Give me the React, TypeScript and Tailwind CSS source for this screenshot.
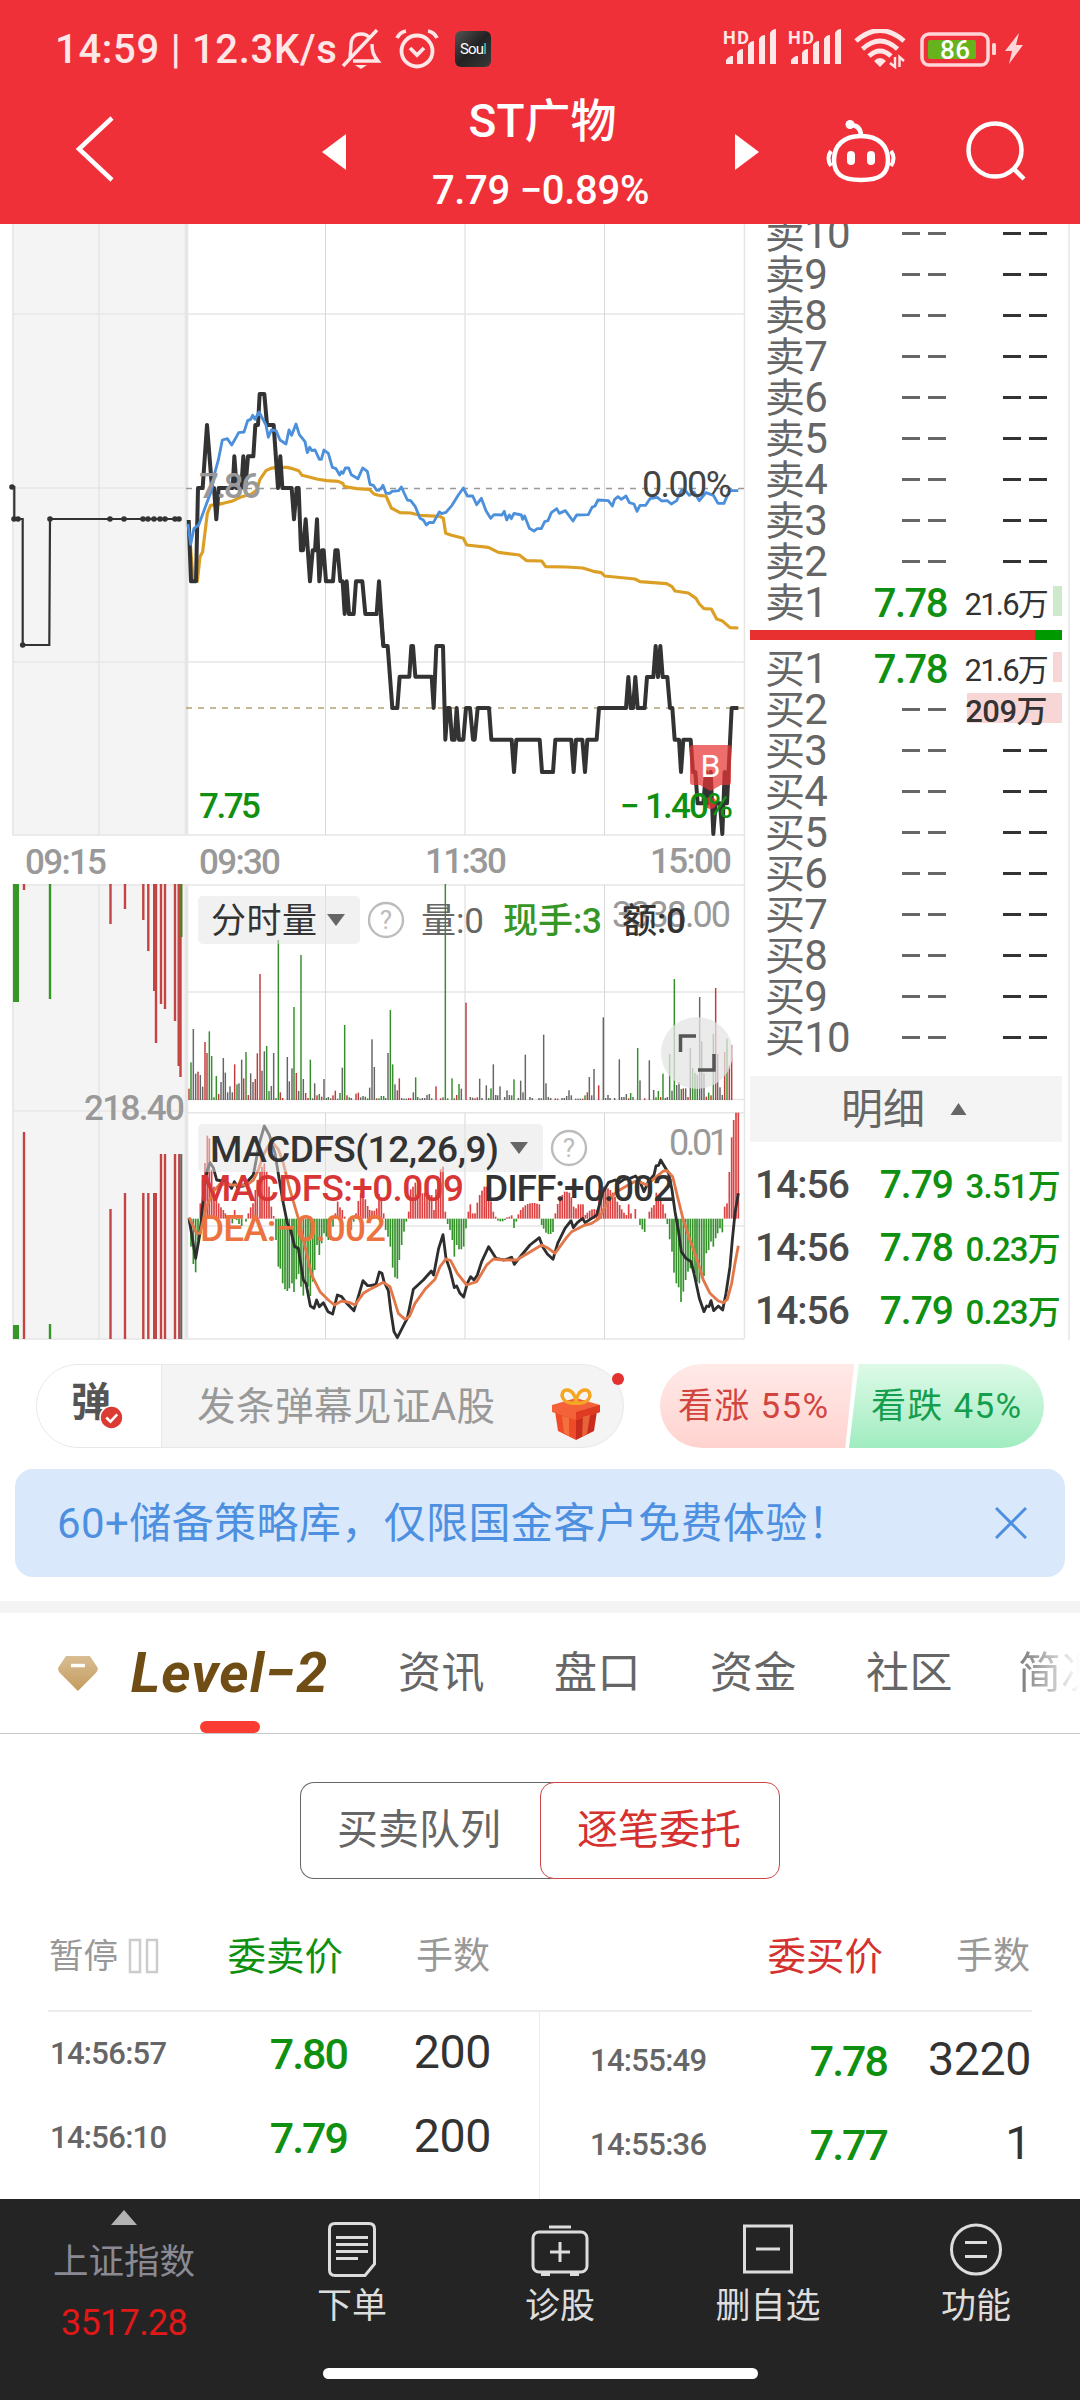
import type { ReactNode } from 'react';

// bar = x, tip y, colour key
const VOLUME_AM = `567,656,r 573,577,g 580,477,k 587,611,k 594,605,r 601,615,k 608,650,k 615,516,r 621,549,r 628,484,g 635,558,g 642,682,g 649,618,g 656,672,r 663,636,k 670,564,k 676,608,k 683,667,k 690,649,k 697,667,k 704,583,r 711,643,g 717,640,k 725,569,k 731,625,r 738,546,g 745,675,r 752,610,k 759,636,k 766,627,r 772,550,r 780,312,r 786,602,k 793,544,k 800,528,g 807,663,g 814,648,k 821,549,k 828,684,g 835,210,g 841,667,r 848,684,r 862,561,k 868,634,k 876,595,k 882,411,g 889,609,r 896,663,k 903,255,g 910,627,k 917,669,r 924,684,r 931,569,g 938,685,k 944,640,k 951,676,r 958,672,g 965,680,r 972,627,k 979,684,g 985,681,k 992,685,k 999,676,r 1006,662,r 1013,686,k 1020,669,g 1027,593,k 1034,465,g 1041,676,r 1048,682,g 1054,684,k 1068,671,r 1075,668,r 1082,682,k 1089,678,k 1096,680,g 1103,685,g 1109,653,k`;
const VOLUME_PM = `6,508,k 13,591,k 20,685,r 27,685,g 34,678,g 41,678,g 47,684,k 54,549,k 61,420,g 68,583,g 75,643,k 82,661,k 88,625,r 95,684,k 102,686,k 109,686,k 116,684,r 122,685,r 130,667,k 137,622,g 143,681,k 150,686,k 157,684,k 164,684,k 171,675,k 178,672,k 185,685,k 198,649,r 212,685,r 219,682,k 226,42,g 233,685,g 246,625,g 253,685,k 260,675,r 267,642,g 274,656,k 288,398,r 301,681,k 308,683,k 315,685,r 322,682,r 329,626,k 336,684,k 349,646,k 356,684,k 363,655,g 370,583,k 377,675,k 383,676,k 390,649,k 404,681,k 411,661,k 418,675,k 425,676,k 432,628,g 445,684,k 452,632,k 459,667,k 466,554,k 480,681,k 487,684,k 507,684,k 514,685,k 521,494,k 528,640,k 535,681,k 542,684,k 556,685,r 563,686,r 576,684,k 583,684,k 590,678,k 597,661,k 604,676,k 617,686,k 624,686,k 631,686,k 638,686,r 645,676,g 652,667,r 658,621,k 665,676,k 672,597,k 686,646,r 700,442,k 707,684,k 714,675,k 720,684,k 734,684,k 748,568,k 755,681,k 762,681,k 769,672,k 776,685,r 782,669,g 789,681,k 803,534,g 810,631,k 824,685,r 838,571,k 851,660,k 858,682,g 865,663,g 872,681,r 879,611,g 886,684,k 892,681,k 899,552,g 906,662,k 913,327,g 920,645,k 927,636,k 934,657,g 940,655,r 947,655,k 954,681,r 961,534,k 968,594,g 975,609,g 982,614,g 989,381,k 995,514,k 1002,610,k 1009,680,r 1016,668,g 1023,676,r 1030,491,g 1037,354,r 1043,552,k 1050,652,k 1057,675,k 1064,546,r 1071,506,g 1078,586,r 1085,525,r`;

const MACD_AM = `567,1060 573,1130 580,1182 587,1207 594,1110 601,1000 608,930 615,879 622,797 628,805 635,900 642,950 649,985 656,1000 663,1012 670,1020 676,1030 683,1040 697,1060 704,1020 710,1050 717,1062 725,1068 738,1055 745,1030 752,1012 759,1000 766,960 772,930 780,905 786,890 793,880 800,905 807,950 814,1010 821,1038 828,1110 835,1190 841,1196 848,1240 855,1258 862,1263 868,1255 876,1240 882,1266 889,1228 896,1212 903,1250 910,1277 917,1240 924,1250 931,1278 938,1235 944,1200 951,1125 958,1155 965,1120 972,1090 979,1100 985,1110 992,1110 999,1070 1006,1030 1013,995 1020,1012 1027,1020 1034,1040 1048,1068 1054,1080 1061,1055 1068,1030 1075,993 1082,970 1089,960 1096,988 1103,1008 1109,1020`;
const MACD_PM = `6,1022 13,1022 20,1015 27,972 34,988 41,1030 47,1080 54,1100 61,1130 68,1193 75,1222 82,1226 88,1170 95,1125 102,1085 109,1055 116,1025 122,958 129,950 136,938 143,948 150,960 157,970 164,968 171,972 178,975 185,975 192,1020 198,958 205,940 212,898 219,890 226,1025 233,1062 240,1080 247,1110 253,1160 260,1125 267,1138 274,1138 281,1130 288,1075 295,1025 301,1003 308,1030 315,1030 322,998 329,975 336,962 343,950 349,950 356,962 363,994 370,1025 377,1040 384,1052 391,1054 398,1054 405,1050 411,1042 418,1040 425,1036 432,1074 439,1055 445,1033 452,1020 459,1012 466,1006 473,1002 480,1000 487,999 494,999 501,1001 508,1003 515,1065 521,1076 528,1088 535,1092 542,1092 549,1086 556,1030 563,1002 570,985 577,975 584,965 591,965 598,968 604,982 611,1010 618,1015 625,1003 632,1003 639,1003 646,1035 652,1028 659,1022 666,1018 673,1017 680,1020 687,960 694,968 701,950 707,950 714,955 721,960 728,968 735,980 742,995 749,1005 755,1018 762,1028 769,1035 776,1003 783,1030 796,1017 810,1065 817,1078 824,1086 838,1025 845,1013 852,1005 859,968 865,985 872,990 879,1003 886,1030 892,1062 899,1108 906,1145 912,1208 919,1240 926,1252 933,1296 940,1265 947,1230 954,1205 961,1195 968,1190 975,1210 981,1235 988,1240 995,1225 1002,1218 1009,1150 1016,1140 1023,1115 1030,1130 1037,1105 1043,1090 1050,1075 1057,1087 1064,1010 1071,1000 1078,906 1085,802 1091,750 1098,728 1105,728`;

const PRICE_AM = '26,480 33,664 48,664 54,384 68,384 81,195 96,384 102,384 109,478 116,384 158,384 163,289 170,384 184,384 190,289 196,384 204,289 220,289 226,195 234,195 239,102 253,102 261,195 281,195 294,384 301,289 307,384 335,384 342,478 350,384 356,384 363,571 369,571 377,478 390,664 398,571 405,571 411,478 418,664 426,571 431,571 438,664 459,664 466,571 473,571 481,664 488,664 494,762 500,664 507,762 521,762 528,664 547,664 556,762 590,762 597,664 610,857';
const PRICE_PM = '2,700 10,798 23,798 37,984 52,984 59,890 88,890 94,798 99,798 106,890 155,890 161,984 169,798 189,798 196,1079 203,984 209,984 216,1079 224,1079 230,984 237,1079 250,1079 258,984 270,984 279,1079 284,1079 293,984 327,984 334,1079 395,1079 402,1176 409,1079 479,1079 486,1176 519,1176 526,1079 574,1079 581,1176 588,1079 607,1079 615,1176 622,1079 650,1079 657,984 738,984 745,891 752,984 759,984 766,891 773,984 794,984 801,891 820,891 827,798 834,891 841,798 848,891 862,891 870,984 877,984 884,1079 897,1079 903,1176 910,1079 932,1079 939,1176 946,1176 953,1270 970,1270 978,1176 985,1270 992,1176 1000,1362 1007,1270 1020,1270 1027,1362 1034,1176 1041,1270 1055,984 1075,984';
const AVG_AM = '26,490 40,664 52,664 60,590 68,575 82,460 92,436 110,434 130,430 155,424 185,410 215,402 230,390 240,358 258,332 272,325 290,322 320,322 338,326 356,332 366,346 390,352 410,357 440,362 475,364 488,370 494,380 530,386 568,388 582,402 600,407';
const AVG_PM = '0,347 18,348 34,384 60,398 92,399 120,406 180,409 190,415 197,460 215,466 250,475 260,495 325,502 355,517 418,525 440,542 485,543 497,560 560,561 608,564 640,574 664,578 674,588 765,597 780,605 860,611 876,620 885,633 925,639 948,655 958,672 972,686 994,687 1010,717 1026,722 1050,743 1075,744';
const INDEX_AM = '24,492 32,553 42,505 56,495 80,430 95,390 104,340 115,300 127,240 142,236 155,255 165,238 176,218 192,216 203,182 212,178 218,166 225,178 237,156 250,180 258,195 265,232 274,210 288,212 300,240 318,252 327,210 335,226 348,192 358,224 375,245 382,278 389,262 396,272 405,270 418,298 424,298 432,270 445,280 457,322 468,326 479,345 484,335 489,340 496,324 506,324 514,344 534,356 548,324 562,334 570,373 580,376 590,391 600,390';
const INDEX_PM = '0,330 9,316 18,340 30,340 36,334 56,332 64,321 82,360 92,362 106,380 120,415 130,420 139,435 148,427 160,428 178,396 185,401 198,397 216,376 235,345 250,324 262,348 278,348 290,374 304,355 318,392 332,415 342,404 366,405 373,394 380,420 388,405 394,416 402,400 424,405 428,418 434,408 448,445 462,453 472,446 484,446 494,425 504,422 514,398 530,386 538,400 556,392 579,423 590,405 625,404 636,382 645,378 654,360 685,362 697,378 704,358 714,350 724,358 738,348 748,368 762,372 771,394 780,376 797,376 810,356 832,352 845,363 862,362 874,372 890,362 905,330 918,334 928,346 942,336 958,362 978,338 1000,346 1014,370 1032,370 1048,332 1075,332';
const DIFF_AM = '567,1045 587,1165 600,1090 612,960 622,900 630,878 640,893 650,930 680,935 695,955 703,935 712,950 730,948 760,915 778,820 793,768 808,795 825,850 838,930 850,1000 862,1060 872,1080 884,1130 895,1135 910,1230 918,1240 931,1308 942,1315 950,1290 958,1310 970,1298 984,1325 998,1332 1012,1275 1025,1280 1040,1300 1062,1322 1075,1280 1089,1232 1103,1247 1110,1247';
const DIFF_PM = '0,1247 18,1243 28,1206 36,1210 42,1235 55,1262 62,1320 72,1385 82,1403 105,1358 112,1345 130,1258 160,1230 184,1203 191,1215 206,1135 219,1094 228,1165 240,1200 253,1253 260,1248 270,1270 281,1281 292,1240 302,1220 312,1230 322,1215 335,1175 356,1130 378,1165 402,1170 425,1162 433,1183 455,1155 480,1125 508,1103 518,1130 532,1152 549,1168 563,1120 585,1075 603,1052 610,1073 622,1058 638,1045 645,1058 670,1042 680,1035 698,968 716,937 735,930 748,938 762,928 780,925 797,918 810,935 822,965 835,935 852,915 858,888 866,886 872,870 885,892 896,910 906,960 915,1025 925,1080 934,1145 948,1165 963,1175 972,1210 988,1285 1002,1325 1010,1308 1017,1310 1023,1292 1031,1322 1045,1308 1058,1320 1068,1270 1080,1190 1087,1110 1095,1030 1105,970';
const DEA_AM = '567,1042 590,1090 600,1090 620,1010 640,965 660,942 700,945 740,945 760,930 775,900 790,855 805,828 820,820 835,838 850,880 870,960 895,1045 915,1130 935,1215 960,1265 985,1290 1003,1305 1025,1293 1050,1298 1065,1305 1090,1270 1110,1258';
const DEA_PM = '0,1258 20,1248 40,1237 60,1250 85,1330 105,1348 118,1340 135,1300 165,1258 195,1228 210,1190 228,1167 242,1172 262,1210 290,1245 320,1235 350,1185 370,1167 402,1170 440,1170 470,1152 515,1125 535,1135 555,1150 590,1102 605,1085 640,1067 665,1060 688,1045 705,1010 722,982 745,962 780,942 800,932 830,945 860,920 880,903 892,902 908,920 925,990 940,1050 960,1110 985,1180 1000,1230 1020,1270 1045,1293 1060,1298 1072,1288 1085,1240 1095,1180 1105,1127';

// pre-open auction bars: x, y1, y2, width, colour
const AUCTION: [number, number, number, number, string][] = [
  [16, 884, 1002, 6, '#369626'], [24, 884, 890, 2.4, '#c44343'], [50, 884, 999, 2.4, '#369626'],
  [110.5, 884, 924, 2.4, '#c44343'], [125, 884, 909, 2.4, '#c44343'], [143.3, 884, 920, 2.4, '#c44343'],
  [148.3, 884, 951, 2.4, '#c44343'], [155, 884, 991, 4, '#c44343'], [156, 884, 1043, 2.4, '#c44343'],
  [161, 884, 1004, 2.4, '#c44343'], [165, 884, 1009, 2.4, '#c44343'], [175, 884, 1021, 2.4, '#c44343'],
  [178.7, 884, 1066, 2.4, '#c44343'], [180.5, 884, 1077, 2.4, '#c44343'], [181.3, 884, 937, 2.4, '#5f7a24'],
  [16, 1325, 1339, 6, '#369626'], [24, 1132, 1339, 2.4, '#c44343'], [50, 1324, 1339, 2.4, '#369626'],
  [110.5, 1209, 1339, 2.4, '#c44343'], [125, 1193, 1339, 2.4, '#c44343'], [143.3, 1193, 1339, 2.4, '#c44343'],
  [148.3, 1193, 1339, 2.4, '#c44343'], [155, 1193, 1339, 4, '#c44343'], [161, 1154, 1339, 2.4, '#c44343'],
  [165, 1154, 1339, 2.4, '#c44343'], [175, 1154, 1339, 2.4, '#c44343'], [179.3, 1154, 1339, 2.4, '#c44343'],
  [181.3, 1154, 1339, 2, '#666'],
];

const BAR_COLORS: Record<string, string> = { r: '#c03c3c', g: '#35902b', k: '#666' };

function VolumeBars({ data }: { data: string }) {
  return (
    <>
      {data.split(' ').map((item, i) => {
        const [x, y, c] = item.split(',');
        return <rect key={i} x={+x - 2.2} y={+y} width={4.4} height={690 - +y} fill={BAR_COLORS[c]} />;
      })}
    </>
  );
}

function MacdBars({ data }: { data: string }) {
  const zero = 1046;
  return (
    <>
      {data.split(' ').map((item, i) => {
        const [x, y] = item.split(',').map(Number);
        return <rect key={i} x={x - 2.5} y={Math.min(y, zero)} width={5} height={Math.abs(y - zero)} fill={y < zero ? '#dc4040' : '#35922a'} />;
      })}
    </>
  );
}

function Line({ d, color, w = 10 }: { d: string; color: string; w?: number }) {
  return <polyline points={d} fill="none" stroke={color} strokeWidth={w} strokeLinejoin="round" />;
}

function Label({ x, y, w, color, size = 35, weight = 500, children }: { x: number; y: number; w: number; color: string; size?: number; weight?: number; children: ReactNode }) {
  return <text x={x} y={y} textLength={w} fill={color} fontSize={size} fontWeight={weight}>{children}</text>;
}

function Help({ x, y }: { x: number; y: number }) {
  return (
    <g>
      <circle cx={x} cy={y} r="17" fill="none" stroke="#bcbcbc" strokeWidth="2.4" />
      <text x={x} y={y + 9} textAnchor="middle" fontSize="26" fill="#bcbcbc">?</text>
    </g>
  );
}

function Chart() {
  return (
    <svg viewBox="0 224 748 1116" className="w-[748px] h-[1116px] shrink-0">
      <rect x="12" y="224" width="174" height="611" fill="#f4f4f4" />
      <rect x="12" y="884" width="174" height="455" fill="#f4f4f4" />
      <g stroke="#e6e6e6" strokeWidth="1.6">
        <path d="M13 224V835M99 224V835M13 884V1339M99 884V1339M465 224V835M465 885V1100M465 1113V1339M744.5 224V1339" />
        <path d="M12 314H744M12 488H186M12 662H744M12 835H744M12 885H744M186 992H744M186 1099.5H744M12 1111H186M186 1112.7H744M186 1226H744M12 1339H744" />
        <path d="M186.5 224V835M186.5 884V1339" strokeWidth="3.6" />
      </g>
      <path d="M325.5 224V835M604.5 224V835M325.5 885V1099M604.5 885V1099M325.5 1113V1339M604.5 1113V1339" stroke="#d8d8d8" strokeWidth="1" />
      <path d="M186 488.5H744" stroke="#999" strokeWidth="1.6" strokeDasharray="6 6" />
      <path d="M186 708H744" stroke="#b3a376" strokeWidth="1.6" strokeDasharray="6 6" />

      <path d="M12.5 487H14.3V519H22.7V645H49.3L50 519H181" fill="none" stroke="#333" strokeWidth="2.2" />
      {[[12, 487], [14, 519], [18, 519], [22.7, 645], [50, 519], [110, 519], [124, 519], [143, 519], [148, 519], [154, 519], [160, 519], [165, 519], [175, 519], [179, 519]].map(([x, y]) => (
        <circle key={`${x}-${y}`} cx={x} cy={y} r="2.8" fill="#333" />
      ))}

      <g transform="translate(180 360) scale(.33333)">
        <Line d={AVG_AM} color="#dc9f25" w={9.5} />
        <Line d={PRICE_AM} color="#333" w={12} />
        <Line d={INDEX_AM} color="#4c8fdb" w={8.5} />
      </g>
      <g transform="translate(380 380) scale(.33333)">
        <Line d={AVG_PM} color="#dc9f25" w={9.5} />
        <Line d={PRICE_PM} color="#333" w={12} />
        <Line d={INDEX_PM} color="#4c8fdb" w={8.5} />
      </g>

      <Label x={199} y={497.5} w={62} color="#999">7.86</Label>
      <Label x={642} y={497} w={90} color="#444" weight={400} size={36}>0.00%</Label>
      <path d="M693 745H728a3 3 0 0 1 3 3V782a3 3 0 0 1-3 3H721L710.5 791L700 785H693a3 3 0 0 1-3-3V748a3 3 0 0 1 3-3Z" fill="#e83535" fillOpacity=".72" />
      <circle cx="710.5" cy="803" r="6" fill="#e83535" fillOpacity=".8" />
      <text x="710.5" y="777" textAnchor="middle" fontSize="32" fill="#fff">B</text>
      <Label x={199} y={818} w={62} color="#109010">7.75</Label>
      <text x={620} y={818} fill="#109010" fontSize="35" fontWeight="500">−</text>
      <Label x={645} y={818} w={88} color="#109010">1.40%</Label>
      <Label x={25} y={874} w={82} color="#999">09:15</Label>
      <Label x={199} y={874} w={82} color="#999">09:30</Label>
      <Label x={425} y={873} w={82} color="#999">11:30</Label>
      <Label x={650} y={873} w={82} color="#999">15:00</Label>

      {AUCTION.map(([x, y1, y2, w, color], i) => (
        <rect key={i} x={x - w / 2} y={y1} width={w} height={y2 - y1} fill={color} />
      ))}
      <Label x={84} y={1120} w={101} color="#999">218.40</Label>

      <g transform="translate(0 870) scale(.33333)">
        <VolumeBars data={VOLUME_AM} />
        <MacdBars data={MACD_AM} />
        <Line d={DIFF_AM} color="#2e2e2e" w={8.5} />
        <Line d={DEA_AM} color="#e2784a" w={8.5} />
      </g>
      <g transform="translate(370 870) scale(.33333)">
        <VolumeBars data={VOLUME_PM} />
        <MacdBars data={MACD_PM} />
        <Line d={DIFF_PM} color="#2e2e2e" w={8.5} />
        <Line d={DEA_PM} color="#e2784a" w={8.5} />
      </g>

      <rect x="198" y="896" width="162" height="48" rx="5" fill="#e4e4e4" fillOpacity=".5" />
      <Label x={211} y={933} w={106} color="#333" weight={400}>分时量</Label>
      <path d="M327 914H345L336 926Z" fill="#666" />
      <Help x={386} y={920} />
      <Label x={612} y={927} w={119} color="#999" weight={400} size={36}>3338.00</Label>
      <Label x={421} y={933} w={63} color="#666" weight={400}>量:0</Label>
      <Label x={503} y={933} w={99} color="#369626">现手:3</Label>
      <Label x={622} y={933} w={64} color="#333">额:0</Label>

      <circle cx="697" cy="1053" r="36" fill="#e4e4e4" fillOpacity=".75" />
      <path d="M680.5 1052V1036H696M698 1070H714V1054" fill="none" stroke="#555" strokeWidth="3.5" />

      <rect x="198" y="1124" width="345" height="48" rx="5" fill="#e4e4e4" fillOpacity=".5" />
      <Label x={210} y={1162} w={289} color="#333" size={37}>MACDFS(12,26,9)</Label>
      <path d="M510 1142H528L519 1154Z" fill="#666" />
      <Help x={569} y={1148} />
      <Label x={669} y={1155} w={60} color="#999" weight={400} size={36}>0.01</Label>
      <Label x={199} y={1201} w={265} color="#d83636" size={37}>MACDFS:+0.009</Label>
      <Label x={484} y={1201} w={190} color="#333" size={37}>DIFF:+0.002</Label>
      <Label x={200} y={1241} w={186} color="#ec7340" size={37}>DEA:−0.002</Label>
    </svg>
  );
}

function Dashes({ className }: { className: string }) {
  return (
    <span className="flex gap-2">
      <i className={`w-[18px] h-[3px] ${className}`} />
      <i className={`w-[18px] h-[3px] ${className}`} />
    </span>
  );
}

function BookRow({ label, price, volume, bar }: { label: string; price?: string; volume?: ReactNode; bar?: string }) {
  return (
    <div className="flex items-center h-[41px] pl-[15px] relative text-[#666]">
      <span className="w-[101px] text-[42px] leading-[41px] whitespace-nowrap tracking-[-0.8px]"><span className="text-[40px]">{label[0]}</span>{label.slice(1)}</span>
      <span className="w-[80px] flex justify-end">
        {price ? <span className="text-[40px] leading-[43px] mt-[2px] -mr-[1px] font-medium text-[#109010] -tracking-[1.5px]">{price}</span> : <Dashes className="bg-[#666]" />}
      </span>
      {bar && <i className={`absolute right-0 top-[4px] h-[30px] ${bar}`} />}
      <span className="w-[101px] flex justify-end relative">
        {volume ? <span className="text-[31px] leading-[41px] mt-[4px] text-[#333] whitespace-nowrap">{volume}</span> : <Dashes className="bg-[#333]" />}
      </span>
    </div>
  );
}

function OrderBook() {
  const trades = [['7.79', '3.51万'], ['7.78', '0.23万'], ['7.79', '0.23万']];
  const best = <span className="-tracking-[1.8px]">21.6万</span>;
  return (
    <div className="w-[320px] h-[1116px] ml-[2px] border-r-2 border-[#ececec] overflow-hidden pr-[6px] flex flex-col">
      <div className="-mt-[11px]">
        {[10, 9, 8, 7, 6, 5, 4, 3, 2].map(n => <BookRow key={n} label={`卖${n}`} />)}
        <BookRow label="卖1" price="7.78" volume={best} bar="w-[9px] bg-[#cdeacd]" />
      </div>
      <div className="flex h-[10px] mt-[7px] shrink-0">
        <div className="w-[285px] bg-[#e83030]" />
        <div className="flex-1 bg-[#009a00]" />
      </div>
      <div className="mt-[8px]">
        <BookRow label="买1" price="7.78" volume={best} bar="w-[9px] bg-[#f9d6d6]" />
        <BookRow label="买2" volume={<span className="font-medium -tracking-[0.5px]">209万</span>} bar="w-[95px] bg-[#f9d6d6]" />
        {[3, 4, 5, 6, 7, 8, 9, 10].map(n => <BookRow key={n} label={`买${n}`} />)}
      </div>
      <div className="mt-[18px] h-[66px] shrink-0 bg-[#f4f4f4] flex items-center pl-[91px] text-[#666] text-[42px]">
        明细
        <svg viewBox="0 0 16 12" className="w-[17px] h-[12px] ml-[25px]"><path d="M0 12L8 0L16 12Z" fill="#666" /></svg>
      </div>
      <div className="mt-[12px]">
        {trades.map(([price, vol], i) => (
          <div key={i} className="flex items-center h-[63px] pl-[5px]">
            <span className="w-[124px] text-[39px] text-[#4a4a4a] font-medium -tracking-[1px]">14:56</span>
            <span className="w-[74px] text-right text-[39px] font-medium text-[#109010] whitespace-nowrap -tracking-[1px]">{price}</span>
            <span className="flex-1 text-right text-[33px] text-[#109010] mr-[2px] mt-[3px] font-medium -tracking-[0.8px] whitespace-nowrap">{vol}</span>
          </div>
        ))}
      </div>
    </div>
  );
}

function Signal() {
  return (
    <svg viewBox="0 0 60 40" className="w-[60px] h-[40px]" fill="#ffe6e7">
      <text x="0" y="15" fontSize="18" fontWeight="700" textLength="26">HD</text>
      <path d="M3 35V31Q5 28 8 27H10V35ZM14 35V24Q16 20 20 20V35ZM25 35V16Q27 12 31 12V35ZM36 35V10Q38 6 42 6V35ZM47 35V4Q49 0 53 0V35Z" />
    </svg>
  );
}

function Header() {
  return (
    <header className="h-[224px] bg-[#f03039] text-white shrink-0">
      <div className="h-[98px] flex items-center pl-[55px] text-[#ffe6e7]">
        <span className="text-[40px] w-[279px] whitespace-nowrap tracking-[0.7px] font-medium mt-[2px]">14:59 | 12.3K/s</span>
        <svg viewBox="0 0 42 42" className="w-[42px] h-[42px] ml-[6px]" fill="none" stroke="#ffe6e7" strokeWidth="3.4">
          <path d="M10 31C10 26 11 22 11 17C11 10 15 6 21 6C25 6 28 7 30 11M32 16C32 23 33 27 38 33H13M37 2L3 38" />
          <path d="M15 37H27L21 41Z" fill="#ffe6e7" stroke="none" />
        </svg>
        <svg viewBox="0 0 44 42" className="w-[44px] h-[42px] ml-[13px]" fill="none" stroke="#ffe6e7" strokeWidth="3.8">
          <circle cx="22" cy="23" r="15.5" />
          <path d="M2 10Q5 4 11 3M42 10Q39 4 33 3M15 20L22 27L29 20" />
        </svg>
        <span className="ml-[16px] w-[36px] h-[36px] rounded-[6px] bg-gradient-to-br from-[#555] via-[#222] to-[#3a3a3a] text-[15px] leading-[36px] text-center text-white -tracking-[0.8px]">Sou<span className="text-[#35d0c0]">l</span></span>
        <div className="ml-[232px] flex items-center gap-[5px]">
          <Signal />
          <Signal />
        </div>
        <svg viewBox="0 0 52 40" className="w-[52px] h-[40px] ml-[6px]" fill="none" stroke="#ffe6e7" strokeWidth="4.8">
          <path d="M2 12Q26 -9 50 12M8.5 20Q26 4 43.5 20M15 27Q26 17 37 27" />
          <path d="M20 32Q26 26 32 32L26 38Z" fill="#ffe6e7" stroke="none" />
          <path d="M41 28V38L36 34M45.5 38V28L50 32" strokeWidth="2.4" />
        </svg>
        <svg viewBox="0 0 106 36" className="w-[106px] h-[36px] ml-[14px] mt-[1px]">
          <rect x="2" y="2" width="66" height="31" rx="7" fill="none" stroke="#ffd5d7" strokeWidth="3.5" />
          <rect x="8" y="8" width="48" height="19" rx="2" fill="#66b31e" />
          <rect x="72" y="11" width="4" height="12" rx="1.5" fill="#ffd5d7" />
          <text x="20" y="26.5" fontSize="26" fontWeight="500" textLength="30" fill="#fff">86</text>
          <path d="M99 1L85 19H92L89 32L103 13H96Z" fill="#ffd5d7" />
        </svg>
      </div>
      <div className="flex h-[126px]">
        <div className="w-[322px] pl-[74px] pt-[18px]">
          <svg viewBox="0 0 44 66" className="w-[44px] h-[66px]" fill="none" stroke="#fff" strokeWidth="4.5"><path d="M38 2L5 33L38 64" /></svg>
        </div>
        <svg viewBox="0 0 24 36" className="w-[24px] h-[36px] mt-[36px]"><path d="M24 0V36L0 18Z" fill="#fff" /></svg>
        <div className="w-[389px] text-center">
          <div className="text-[46px] leading-[50px] -mt-[2px] font-medium pl-[4px]">ST广物</div>
          <div className="text-[40px] leading-[50px] mt-[20px] font-medium whitespace-nowrap -tracking-[0.3px]">7.79 −0.89%</div>
        </div>
        <svg viewBox="0 0 24 36" className="w-[24px] h-[36px] mt-[36px]"><path d="M0 0V36L24 18Z" fill="#fff" /></svg>
        <svg viewBox="0 0 72 66" className="w-[72px] h-[66px] mt-[20px] ml-[66px]" fill="none" stroke="#fff" strokeWidth="4.5">
          <path d="M36 18C54 18 63 28 63 42C63 56 55 62 36 62C17 62 9 56 9 42C9 28 18 18 36 18Z" />
          <path d="M36 18C36 10 32 7 25 7" />
          <circle cx="25" cy="6.5" r="4.5" fill="#fff" stroke="none" />
          <path d="M6 33Q1 40 6 48M66 33Q71 40 66 48" strokeWidth="4" />
          <rect x="22" y="33" width="8" height="14" rx="4" fill="#fff" stroke="none" />
          <rect x="42" y="33" width="8" height="14" rx="4" fill="#fff" stroke="none" />
        </svg>
        <svg viewBox="0 0 62 64" className="w-[62px] h-[64px] mt-[22px] ml-[67px]" fill="none" stroke="#fff" strokeWidth="4.5">
          <circle cx="31" cy="30" r="26.5" />
          <path d="M50 49L60 59" />
        </svg>
      </div>
    </header>
  );
}

function CommentBar() {
  return (
    <div className="flex h-[84px] mt-[24px] pl-[36px] shrink-0">
      <div className="w-[588px] flex rounded-full border border-[#e8e8e8] bg-[#f4f4f4] relative">
        <div className="w-[125px] bg-white rounded-l-full border-r border-[#e8e8e8] flex items-center pl-[34px]">
          <span className="text-[40px] font-bold text-[#555] relative -top-[3px]">弹</span>
        </div>
        <svg viewBox="0 0 24 24" className="absolute left-[62px] top-[40px] w-[25px] h-[25px]">
          <circle cx="12" cy="12" r="11" fill="#db3b32" stroke="#fff" strokeWidth="1.5" />
          <path d="M7 12L11 16L17.5 9" fill="none" stroke="#fff" strokeWidth="2.4" />
        </svg>
        <span className="ml-[35px] text-[38.5px] leading-[84px] text-[#999] tracking-[0.5px] whitespace-nowrap">发条弹幕见证A股</span>
        <svg viewBox="0 0 52 54" className="absolute left-[513px] top-[22px] w-[52px] h-[54px]">
          <path d="M5 24L26 32V53L8 44Z" fill="#ee4b28" />
          <path d="M47 24L26 32V53L44 44Z" fill="#c92c1c" />
          <path d="M2 18L26 11L50 18V25L26 33L2 25Z" fill="#f4623a" />
          <path d="M50 18V25L26 33V25Z" fill="#df3a22" />
          <path d="M12 29L19 31V49L14 46ZM33 30L40 28L37 47L32 50Z" fill="#f98a4e" fillOpacity=".6" />
          <path d="M26 16C10 18 9 3 17 3C22 3 26 9 26 16C26 9 30 3 35 3C43 3 42 18 26 16Z" fill="none" stroke="#f5a623" strokeWidth="3.5" />
        </svg>
        <i className="absolute left-[575px] top-[8px] w-[12px] h-[12px] rounded-full bg-[#e2312f]" />
      </div>
      <div className="ml-[36px] w-[384px] flex rounded-full overflow-hidden text-[35px] leading-[85px] tracking-[1.3px] whitespace-nowrap">
        <div className="w-[194px] pl-[18px] bg-gradient-to-b from-[#ffeae8] to-[#ffd3cf] text-[#d2453f] [clip-path:polygon(0_0,100%_0,95.5%_100%,0_100%)]">看涨 55%</div>
        <div className="w-[195px] -ml-[5px] pl-[22px] bg-gradient-to-b from-[#ddfae8] to-[#a0ecc0] text-[#159e4e] [clip-path:polygon(5%_0,100%_0,100%_100%,0_100%)]">看跌 45%</div>
      </div>
    </div>
  );
}

function Tabs() {
  return (
    <div className="h-[121px] shrink-0 border-b border-[#c8c8c8] flex items-center relative text-[43px] text-[#666] overflow-hidden">
      <svg viewBox="0 0 42 36" className="w-[42px] h-[36px] ml-[57px]">
        <defs><linearGradient id="gem" x1="0" y1="0" x2="0" y2="1"><stop offset="0" stopColor="#d9bd93" /><stop offset="1" stopColor="#c39b5d" /></linearGradient></defs>
        <path d="M9 1H33L41 13Q41 16 39 18L21 36L3 18Q1 16 1 13Z" fill="url(#gem)" />
        <path d="M14 10.5H28" stroke="#fff" strokeWidth="3.5" />
      </svg>
      <span className="ml-[32px] w-[268px] text-[56px] font-bold italic text-[#704d14] tracking-[1px]">Level−2</span>
      {['资讯', '盘口', '资金', '社区'].map(t => <span key={t} className="w-[156px] shrink-0 tracking-[0.5px] pt-[1px]">{t}</span>)}
      <span className="shrink-0 -ml-[4px] pt-[1px] bg-gradient-to-r from-[#777] to-transparent bg-clip-text text-transparent w-[62px] whitespace-nowrap overflow-hidden">简况</span>
      <i className="absolute left-[200px] bottom-0 w-[60px] h-[12px] rounded-[6px] bg-[#fa3c32]" />
    </div>
  );
}

function OrderRow({ time, price, qty }: { time: string; price: string; qty: string }) {
  return (
    <div className="flex items-center h-[84px]">
      <span className="w-[136px] text-[31px] text-[#666] -tracking-[0.7px] font-medium">{time}</span>
      <span className="w-[161px] text-right text-[43px] font-medium text-[#109010] -tracking-[2px]">{price}</span>
      <span className="w-[144px] text-right text-[46.5px] text-[#333] -tracking-[0.4px] -mt-[2px]">{qty}</span>
    </div>
  );
}

function OrderQueue() {
  return (
    <div className="h-[465px] shrink-0 px-[48px] pt-[48px]">
      <div className="flex w-[480px] h-[97px] ml-[252px] text-[41px] text-center leading-[95px]">
        <div className="w-[253px] pr-[16px] rounded-l-[14px] border-[1.5px] border-r-0 border-[#666] text-[#666]">买卖队列</div>
        <div className="w-[240px] -ml-[13px] pr-[2px] rounded-[14px] border-[1.5px] border-[#c44] bg-white text-[#d5312f]">逐笔委托</div>
      </div>
      <div className="flex items-center h-[56px] mt-[50px] text-[37px] text-[#999]">
        <span className="w-[80px] text-[34.5px] pl-[1px] whitespace-nowrap">暂停</span>
        <svg viewBox="0 0 32 36" className="w-[32px] h-[36px] -mt-[2px]" fill="none" stroke="#ccc" strokeWidth="2.5"><path d="M2 2H12V34H2ZM19 2H29V34H19Z" /></svg>
        <span className="w-[183px] text-right text-[38.5px] text-[#109010]">委卖价</span>
        <span className="w-[147px] text-right">手数</span>
        <span className="w-[393px] text-right text-[38.5px] text-[#d5312f]">委买价</span>
        <span className="w-[147px] text-right">手数</span>
      </div>
      <div className="flex mt-[25px] h-[189px] border-t-2 border-[#ececec]">
        <div className="w-[492px] border-r border-[#ececec] pl-[2px]">
          <OrderRow time="14:56:57" price="7.80" qty="200" />
          <OrderRow time="14:56:10" price="7.79" qty="200" />
        </div>
        <div className="pl-[50px] pt-[7px]">
          <OrderRow time="14:55:49" price="7.78" qty="3220" />
          <OrderRow time="14:55:36" price="7.77" qty="1" />
        </div>
      </div>
    </div>
  );
}

function NavItem({ label, children }: { label: string; children: ReactNode }) {
  return (
    <div className="w-[208px] flex flex-col items-center text-[35px] leading-[50px] text-[#ddd]">
      <svg viewBox="0 0 60 60" className="w-[60px] h-[60px]" fill="none" stroke="#ddd" strokeWidth="3">{children}</svg>
      <span className="mt-[3px]">{label}</span>
    </div>
  );
}

function BottomNav() {
  return (
    <footer className="flex-1 bg-[#242424] flex flex-col items-center">
      <div className="flex w-full h-[169px]">
        <div className="w-[248px] flex flex-col items-center pt-[11px]">
          <svg viewBox="0 0 26 15" className="w-[26px] h-[15px]"><path d="M0 15L13 0L26 15Z" fill="#b3b3b3" /></svg>
          <span className="text-[35.5px] leading-[50px] mt-[12px] text-[#8a8a94]">上证指数</span>
          <span className="text-[36px] leading-[50px] mt-[11px] text-[#e01818] -tracking-[0.7px]">3517.28</span>
        </div>
        <div className="flex pt-[20px]">
          <NavItem label="下单">
            <path d="M13 4.5H47Q52.5 4.5 52.5 10V45L43 56.5H13Q7.5 56.5 7.5 51V10Q7.5 4.5 13 4.5Z" />
            <path d="M14 18.5H46M14 25.5H46M14 32.5H46M14 39.5H36" />
          </NavItem>
          <NavItem label="诊股">
            <rect x="3" y="13" width="54" height="40" rx="6" />
            <path d="M19 8H41M20 33H40M30 23V43M11 55.5H20M40 55.5H49" />
          </NavItem>
          <NavItem label="删自选">
            <rect x="6.5" y="7" width="47" height="46" />
            <path d="M18 30H42" />
          </NavItem>
          <NavItem label="功能">
            <circle cx="30" cy="30.5" r="24.5" />
            <path d="M19 23.5H41M19 37.5H41" />
          </NavItem>
        </div>
      </div>
      <div className="w-[435px] h-[11px] rounded-full bg-white" />
    </footer>
  );
}

export default function App() {
  return (
    <div className="w-[1080px] h-[2400px] overflow-hidden bg-white flex flex-col font-['Roboto','Noto_Sans_CJK_SC',sans-serif]">
      <Header />
      <div className="flex h-[1116px] shrink-0">
        <Chart />
        <OrderBook />
      </div>
      <CommentBar />
      <div className="mt-[21px] mx-[15px] h-[108px] shrink-0 rounded-[18px] bg-[#dae8fb] flex items-center justify-between pl-[42px] pr-[38px] text-[42px] text-[#4d8fe0]">
        <span className="whitespace-nowrap tracking-[0.4px] pt-[1px]">60+储备策略库，仅限国金客户免费体验！</span>
        <svg viewBox="0 0 32 32" className="w-[32px] h-[32px]" stroke="#4d8fe0" strokeWidth="3"><path d="M1 1L31 31M31 1L1 31" /></svg>
      </div>
      <div className="h-[12px] mt-[24px] bg-[#f4f4f4] shrink-0" />
      <Tabs />
      <OrderQueue />
      <BottomNav />
    </div>
  );
}
